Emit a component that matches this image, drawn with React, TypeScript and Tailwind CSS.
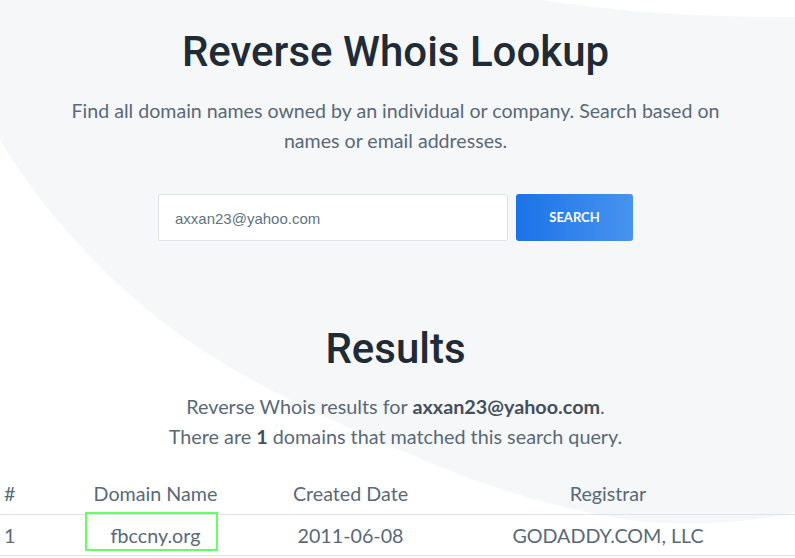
import React from "react";

export default function App() {
  return (
    <div className="relative w-[795px] h-[558px] overflow-hidden bg-white">
      <svg className="absolute inset-0" width="795" height="558" viewBox="0 0 795 558">
        <path
          d="M0 0 L540 0 C600 8 660 17 795 17 L795 512 C760 522 690 527 630 520 C560 510 480 485 417 457 C340 425 260 390 187 340 C110 285 45 215 0 140 Z"
          fill="#f5f7f9"
        />
      </svg>
      <div className="relative w-[791px] flex flex-col items-center font-['Lato',sans-serif]">
        <h1 className="mt-[28px] text-[42px] leading-[48px] font-medium text-[#212b36] font-['Roboto',sans-serif]">
          Reverse Whois Lookup
        </h1>
        <p className="mt-[20px] max-w-[670px] text-center text-[19.6px] leading-[30px] text-[#5a6978]">
          Find all domain names owned by an individual or company. Search based on names or email addresses.
        </p>
        <div className="mt-[38px] flex gap-2">
          <div className="w-[350px] h-[47px] flex items-center px-4 pt-[3px] bg-white border border-[#dfe3e8] rounded-[2px]">
            <span className="text-[15px] text-[#637381] font-['Liberation_Sans',sans-serif]">axxan23@yahoo.com</span>
          </div>
          <button className="w-[117px] h-[47px] rounded-[3px] bg-gradient-to-r from-[#1a73e8] to-[#4793ef] text-white text-[13px] font-bold">
            SEARCH
          </button>
        </div>
        <h2 className="mt-[84px] text-[42px] leading-[48px] font-medium text-[#212b36] font-['Roboto',sans-serif]">
          Results
        </h2>
        <p className="mt-[18px] text-center text-[19.8px] leading-[30px] text-[#5a6978]">
          Reverse Whois results for <b className="font-bold text-[#454f5b]">axxan23@yahoo.com</b>.
          <br />
          There are <b className="font-bold text-[#454f5b]">1</b> domains that matched this search query.
        </p>
        <div className="mt-[29px] self-start w-[795px] shrink-0 text-[19.7px] leading-[27px] text-[#5a6978]">
          <div className="grid grid-cols-[31px_249px_141px_374px] pb-[7px] border-b border-[#dfe3e8]">
            <div className="pl-[4px]">#</div>
            <div className="text-center">Domain Name</div>
            <div className="text-center">Created Date</div>
            <div className="text-center">Registrar</div>
          </div>
          <div className="grid grid-cols-[31px_249px_141px_374px] pt-[7px] pb-[6px] border-b border-[#dfe3e8]">
            <div className="pl-[4px]">1</div>
            <div className="relative text-center">
              fbccny.org
              <div className="absolute left-[54px] top-[-10px] w-[133px] h-[39px] border-2 border-[#66ff66]" />
            </div>
            <div className="text-center">2011-06-08</div>
            <div className="text-center">GODADDY.COM, LLC</div>
          </div>
        </div>
      </div>
    </div>
  );
}
